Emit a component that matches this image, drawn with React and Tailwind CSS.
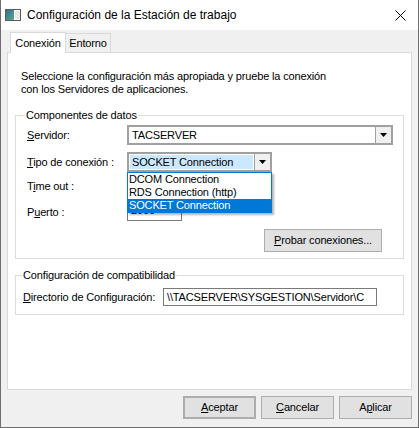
import { useState } from "react";

const font = { fontFamily: '"Liberation Sans", Arial, sans-serif' };

const Ul = ({ children }) => <span className="underline underline-offset-[1px]">{children}</span>;

function WinIcon() {
  return (
    <svg width="16" height="14" viewBox="0 0 16 14">
      <defs>
        <linearGradient id="g1" x1="0" y1="0" x2="1" y2="1">
          <stop offset="0" stopColor="#2f6f8f" />
          <stop offset="1" stopColor="#5fa88a" />
        </linearGradient>
      </defs>
      <rect x="0.5" y="1.5" width="15" height="11" fill="#fff" stroke="#5a5a5a" />
      <rect x="1" y="2" width="8" height="10" fill="url(#g1)" />
      <rect x="10" y="3" width="5" height="8" fill="#e8e8e8" />
    </svg>
  );
}

function Arrow() {
  return (
    <svg width="7" height="4" viewBox="0 0 7 4">
      <path d="M0 0h7L3.5 4z" fill="#000" />
    </svg>
  );
}

function Combo({ value, width, selected, children }) {
  return (
    <div className={`relative flex h-[20px] ${width} border-2 border-[#a0a0a0] bg-white`}>
      <div className={`flex-1 flex items-center ${selected ? "bg-[#cce8ff] m-px pl-[2px]" : "pl-[3px]"}`}>
        {value}
      </div>
      <div className="w-[16px] flex items-center justify-center bg-[#f0f0f0] border-l border-[#a0a0a0]">
        <Arrow />
      </div>
      {children}
    </div>
  );
}

const Btn = ({ children, className = "" }) => (
  <button className={`h-[23px] bg-[#e1e1e1] border border-[#adadad] text-black ${className}`}>{children}</button>
);

export default function App() {
  const [tab] = useState("conexion");
  const options = ["DCOM Connection", "RDS Connection (http)", "SOCKET Connection"];

  return (
    <div style={font} className="w-[419px] h-[428px] flex flex-col bg-[#f0f0f0] border-x border-b border-[#6e6e6e] text-[11px] tracking-[-0.15px] text-black leading-[13px]">
      {/* Title bar */}
      <div className="h-[30px] bg-white flex items-center shrink-0 tracking-normal">
        <div className="ml-[4px] mr-[6px] flex"><WinIcon /></div>
        <span className="text-[12px]">Configuración de la Estación de trabajo</span>
        <svg className="ml-auto mr-[12px]" width="11" height="11" viewBox="0 0 11 11">
          <path d="M0.5 0.5l10 10M10.5 0.5l-10 10" stroke="#000" strokeWidth="1" />
        </svg>
      </div>

      {/* Tabs */}
      <div className="flex items-end h-[22px] pl-[9px] shrink-0">
        <div className={`relative z-10 -mb-px h-[21px] w-[56px] flex items-center justify-center border border-b-0 border-[#d9d9d9] ${tab === "conexion" ? "bg-white" : ""}`}>
          Conexión
        </div>
        <div className="h-[19px] w-[45px] flex items-center justify-center border border-l-0 border-b-0 border-[#d9d9d9] bg-[#f0f0f0]">
          Entorno
        </div>
      </div>

      {/* Panel */}
      <div className="mx-[6px] h-[338px] shrink-0 bg-white border border-[#d9d9d9] flex flex-col">
        <p className="pl-[13px] pt-[17px] leading-[13px]">
          Seleccione la configuración más apropiada y pruebe la conexión<br />
          con los Servidores de aplicaciones.
        </p>

        <fieldset className="min-w-0 mx-[7px] mt-[12px] border border-[#dcdcdc] pl-[11px] pr-[9px] pb-[6px]">
          <legend className="-ml-[2px] px-[1px] leading-[14px]">Componentes de datos</legend>
          <div className="flex flex-col">
            <div className="flex items-center mt-[3px]">
              <span className="w-[100px]"><Ul>S</Ul>ervidor:</span>
              <Combo value="TACSERVER" width="w-[266px]" />
            </div>
            <div className="flex items-center mt-[7px] relative z-20">
              <span className="w-[100px]"><Ul>T</Ul>ipo de conexión :</span>
              <Combo value="SOCKET Connection" width="w-[145px]" selected>
                <div className="absolute left-[-2px] top-[18px] w-[145px] bg-white border border-[#0078d7] shadow-[2px_2px_2px_rgba(0,0,0,0.3)]">
                  {options.map((o, i) => (
                    <div key={o} className={`h-[13px] pl-[1px] flex items-center ${i === 2 ? "bg-[#0078d7] text-white" : ""}`}>{o}</div>
                  ))}
                </div>
              </Combo>
            </div>
            <div className="flex items-center mt-[4px]">
              <span className="w-[100px]">T<Ul>i</Ul>me out :</span>
              <div className="h-[21px] w-[55px] border border-[#7a7a7a] bg-white" />
            </div>
            <div className="flex items-center mt-[2px]">
              <span className="w-[100px] pt-[4px]">P<Ul>u</Ul>erto :</span>
              <div className="h-[22px] w-[55px] border border-[#7a7a7a] bg-white pl-[3px] flex items-center">2000</div>
            </div>
            <div className="flex justify-end mt-[8px] mr-[12px]">
              <Btn className="w-[118px]"><Ul>P</Ul>robar conexiones...</Btn>
            </div>
          </div>
        </fieldset>

        <fieldset className="min-w-0 mx-[7px] mt-[9px] border border-[#dcdcdc] pl-[7px] pb-[8px]">
          <legend className="-ml-[1px] px-[1px] leading-[14px]">Configuración de compatibilidad</legend>
          <div className="flex items-center mt-[6px]">
            <span className="w-[140px] whitespace-nowrap"><Ul>D</Ul>irectorio de Configuración:</span>
            <div className="h-[18px] w-[214px] border border-[#7a7a7a] bg-white pl-[3px] flex items-center overflow-hidden whitespace-nowrap">
              \\TACSERVER\SYSGESTION\Servidor\C
            </div>
          </div>
        </fieldset>
      </div>

      {/* Buttons */}
      <div className="flex justify-end gap-[5px] pr-[6px] mt-[6px]">
        <Btn className="w-[73px] border-2 border-[#0078d7]"><Ul>A</Ul>ceptar</Btn>
        <Btn className="w-[73px]"><Ul>C</Ul>ancelar</Btn>
        <Btn className="w-[73px]">A<Ul>p</Ul>licar</Btn>
      </div>
    </div>
  );
}
